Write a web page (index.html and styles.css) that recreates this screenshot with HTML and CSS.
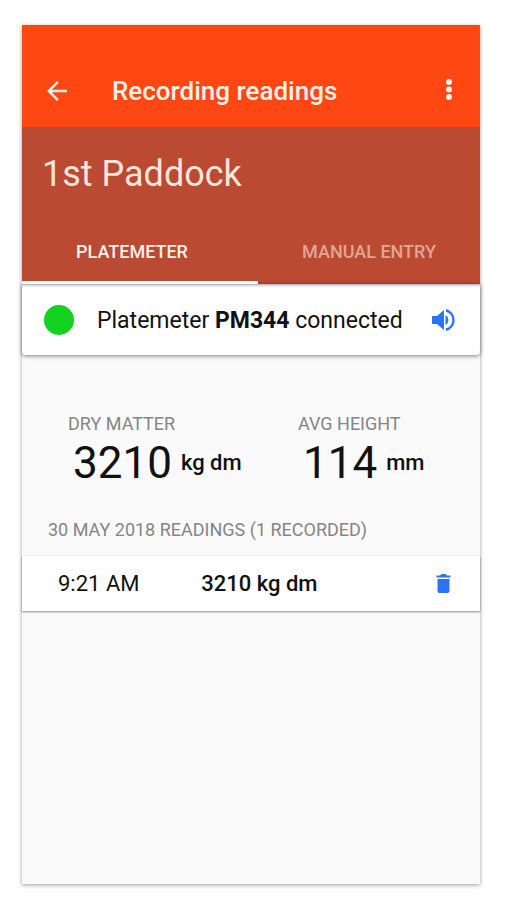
FILE: index.html
```
<!DOCTYPE html>
<html lang="en">

<head>
  <meta charset="UTF-8">
  <meta name="viewport" content="width=device-width, initial-scale=1.0">
  <title>Recording readings</title>
  <link rel="stylesheet" href="styles.css">
</head>

<body>
  <div class="app">
    <header class="app-bar">
      <button class="icon-button" type="button" aria-label="Back">
        <svg class="icon icon-large" viewBox="0 0 24 24"><path d="M20 11H7.83l5.59-5.59L12 4l-8 8 8 8 1.41-1.41L7.83 13H20v-2z"/></svg>
      </button>
      <h1 class="app-title">Recording readings</h1>
      <button class="icon-button" type="button" aria-label="More options">
        <svg class="icon" viewBox="0 0 24 24"><circle cx="11" cy="3" r="3"/><circle cx="11" cy="10.5" r="3"/><circle cx="11" cy="18" r="3"/></svg>
      </button>
    </header>

    <div class="paddock">
      <h2 class="paddock-name">1st Paddock</h2>
      <div class="tabs" role="tablist">
        <button class="tab active" type="button" role="tab" aria-selected="true">Platemeter</button>
        <button class="tab" type="button" role="tab" aria-selected="false">Manual entry</button>
      </div>
    </div>

    <main>
      <div class="connection">
        <span class="status-dot"></span>
        <p class="connection-text">Platemeter <strong>PM344</strong> connected</p>
        <button class="icon-button blue" type="button" aria-label="Sound">
          <svg class="icon" viewBox="0 0 24 24">
            <path d="M0 8v8h5l7 6V2L5 8H0z"/>
            <path d="M13.500 7v10a5.800 5.800 0 0 0 0-10z"/>
            <path d="M14 1v2.700a8.600 8.600 0 0 1 0 16.600V23a11.300 11.300 0 0 0 0-22z"/>
          </svg>
        </button>
      </div>

      <div class="stats">
        <div class="stat">
          <p class="label">Dry matter</p>
          <p class="stat-value">3210 <span class="unit">kg dm</span></p>
        </div>
        <div class="stat">
          <p class="label">Avg height</p>
          <p class="stat-value">114 <span class="unit">mm</span></p>
        </div>
      </div>

      <h3 class="label readings-title">30 May 2018 readings (1 recorded)</h3>
      <ul class="readings">
        <li class="reading">
          <time class="reading-time">9:21 AM</time>
          <span class="reading-value">3210 kg dm</span>
          <button class="icon-button blue" type="button" aria-label="Delete reading">
            <svg class="icon" viewBox="0 0 24 24"><path d="M5.5 7h12v12a2 2 0 0 1-2 2h-8a2 2 0 0 1-2-2V7zM4.5 3.500H8l1.500-1.500h4L15 3.500h3.500v2h-14v-2z"/></svg>
          </button>
        </li>
      </ul>
    </main>
  </div>
</body>

</html>
```

FILE: styles.css
```
* {
  box-sizing: border-box;
}

:root {
  --orange: #ff4713;
  --rust: #bb4a32;
  --green: #12d322;
  --blue: #2a73f6;
  --grey: #858585;
}

body {
  display: flex;
  min-height: 100vh;
  margin: 0;
  padding: 25px 26px 16px 22px;
  background: #fff;
  color: #111;
  font-family: Roboto, sans-serif;
}

h1, h2, h3, p, ul {
  margin: 0;
  padding: 0;
}

.app {
  flex: 1;
  background: #fafafa;
  box-shadow: 0 1px 4px rgba(0, 0, 0, 0.4);
}

.icon-button {
  display: flex;
  flex-shrink: 0;
  padding: 0;
  border: 0;
  background: none;
  color: inherit;
}

.icon {
  width: 24px;
  height: 24px;
  fill: currentColor;
}

.icon-large {
  width: 30px;
  height: 30px;
}

.blue {
  color: var(--blue);
}

.app-bar {
  display: flex;
  align-items: center;
  padding: 50px 18px 20px 20px;
  background: var(--orange);
  color: #fff0ea;
}

.app-title {
  flex: 1;
  margin-left: 40px;
  font-size: 26px;
  line-height: 32px;
  font-weight: 500;
}

.paddock {
  background: var(--rust);
}

.paddock-name {
  padding: 26px 20px 0;
  color: #fde4dc;
  font-size: 36px;
  line-height: 42px;
  font-weight: 400;
}

.tabs {
  display: grid;
  grid-template-columns: 236fr 222fr;
  margin-top: 26px;
}

.tab {
  height: 63px;
  padding: 0;
  border: 0;
  border-bottom: 3px solid transparent;
  background: none;
  color: #e3a494;
  font: 500 18px Roboto, sans-serif;
  text-transform: uppercase;
}

.tab.active {
  padding-right: 16px;
  border-color: #fff;
  color: #fff0ea;
}

.connection {
  display: flex;
  align-items: center;
  padding: 20px 24px 19px 22px;
  border-radius: 0 0 4px 4px;
  background: #fff;
  box-shadow: 0 1px 4px rgba(0, 0, 0, 0.5), inset 0 3px 3px -2px rgba(0, 0, 0, 0.4);
}

.status-dot {
  width: 30px;
  height: 30px;
  border-radius: 50%;
  background: var(--green);
}

.connection-text {
  flex: 1;
  margin-left: 23px;
  padding-top: 2px;
  font-size: 23px;
  line-height: 30px;
}

.connection-text strong {
  font-weight: 700;
}

.label {
  color: var(--grey);
  font-size: 18px;
  line-height: 24px;
  font-weight: 400;
  text-transform: uppercase;
}

.stats {
  display: grid;
  grid-template-columns: 1fr 1fr;
  padding: 57px 0 0 46px;
}

.stat:last-child {
  padding-left: 24px;
}

.stat-value {
  display: flex;
  align-items: center;
  gap: 9px;
  padding-left: 5px;
  font-size: 44px;
  line-height: 54px;
}

.unit {
  font-size: 22px;
  font-weight: 500;
}

.readings-title {
  padding: 28px 26px 14px;
}

.readings {
  list-style: none;
}

.reading {
  display: flex;
  align-items: center;
  padding: 12px 24px 11px 36px;
  background: #fff;
  box-shadow: 0 1px 2px rgba(0, 0, 0, 0.45);
  font-size: 22px;
  line-height: 32px;
}

.reading-time {
  flex: 0 0 36%;
}

.reading-value {
  flex: 1;
  font-weight: 500;
}
```
